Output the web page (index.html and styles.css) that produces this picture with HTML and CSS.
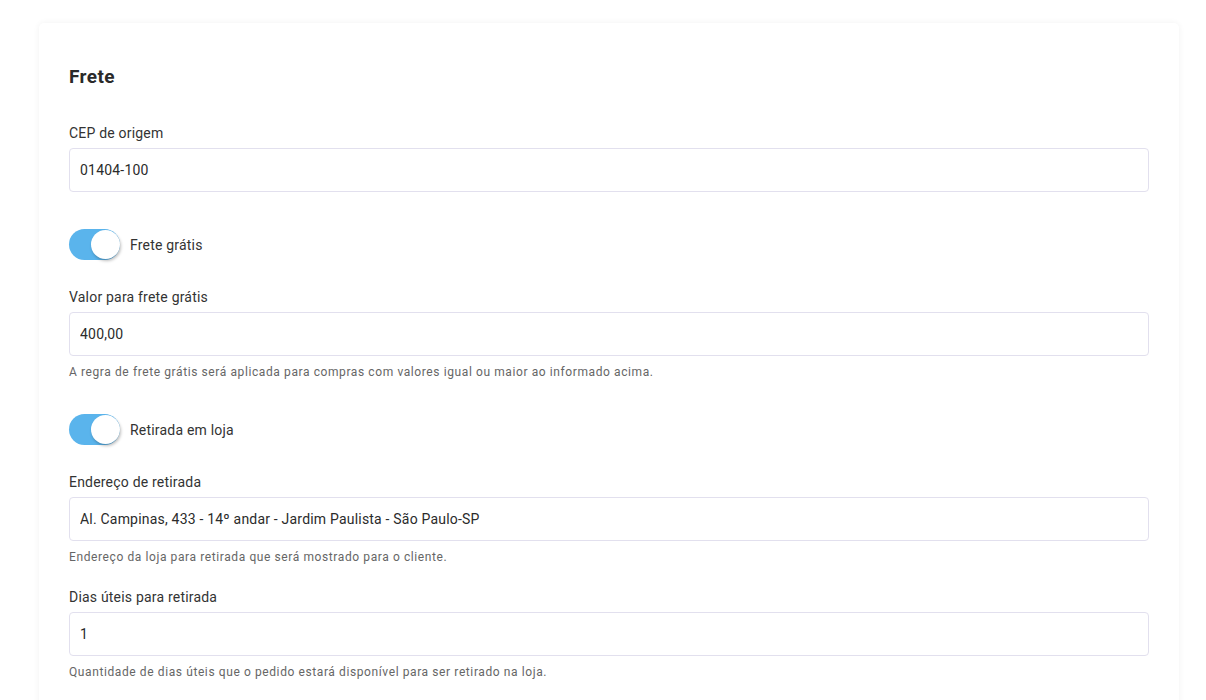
FILE: index.html
```html
<!DOCTYPE html>
<html lang="pt-BR">

<head>
    <meta charset="UTF-8">
    <title>Frete</title>
    <link rel="stylesheet" href="styles.css">
</head>

<body>
    <div class="page">
        <div class="card">
            <h2 class="card-title">Frete</h2>

            <div class="field field-spaced">
                <label class="field-label" for="cep">CEP de origem</label>
                <input class="field-input" id="cep" type="text" value="01404-100">
            </div>

            <div class="switch-row">
                <label class="switch">
                    <input type="checkbox" checked>
                    <span class="slider"></span>
                </label>
                <span class="switch-label">Frete grátis</span>
            </div>

            <div class="field">
                <label class="field-label" for="valor">Valor para frete grátis</label>
                <input class="field-input" id="valor" type="text" value="400,00">
                <small class="field-help">A regra de frete grátis será aplicada para compras com valores igual ou maior ao informado acima.</small>
            </div>

            <div class="switch-row">
                <label class="switch">
                    <input type="checkbox" checked>
                    <span class="slider"></span>
                </label>
                <span class="switch-label">Retirada em loja</span>
            </div>

            <div class="field">
                <label class="field-label" for="endereco">Endereço de retirada</label>
                <input class="field-input" id="endereco" type="text" value="Al. Campinas, 433 - 14º andar - Jardim Paulista - São Paulo-SP">
                <small class="field-help">Endereço da loja para retirada que será mostrado para o cliente.</small>
            </div>

            <div class="field">
                <label class="field-label" for="dias">Dias úteis para retirada</label>
                <input class="field-input" id="dias" type="text" value="1">
                <small class="field-help">Quantidade de dias úteis que o pedido estará disponível para ser retirado na loja.</small>
            </div>
        </div>
    </div>
</body>

</html>
```

FILE: styles.css
```css
* {
    box-sizing: border-box;
    margin: 0;
    padding: 0;
}

body {
    font-family: 'Roboto', 'Liberation Sans', sans-serif;
    color: #2b2b2b;
    background: #fff;
    letter-spacing: 0.2px;
}

.page {
    padding: 23px 27px 0 39px;
}

/* Card */
.card {
    background: #fff;
    border-radius: 5px;
    padding: 42px 30px 30px;
    box-shadow: 0 0 6px rgba(0, 0, 0, 0.06);
}

.card-title {
    font-size: 19px;
    font-weight: 700;
    line-height: 24px;
    letter-spacing: 0.4px;
    color: #2a2a2a;
    margin-bottom: 34px;
}

/* Fields */
.field {
    margin-bottom: 22px;
}

.field-spaced {
    margin-bottom: 25px;
}

.field-label {
    display: block;
    font-size: 14px;
    line-height: 20px;
    color: #333;
    margin-bottom: 5px;
}

.field-input {
    display: block;
    width: 100%;
    height: 44px;
    padding: 0 10px;
    font-family: inherit;
    font-size: 14px;
    letter-spacing: 0.2px;
    color: #2b2b2b;
    background: #fff;
    border: 1px solid #e2e0ee;
    border-radius: 4px;
    outline: none;
}

.field-help {
    display: block;
    margin-top: 8px;
    font-size: 12px;
    line-height: 16px;
    letter-spacing: 0.6px;
    color: #666;
}

/* Switch */
.switch-row {
    display: flex;
    align-items: center;
    gap: 10px;
    padding: 12px 0 13px;
    margin-bottom: 14px;
}

.switch {
    position: relative;
    display: inline-block;
    width: 51px;
    height: 31px;
}

.switch input {
    display: none;
}

.slider {
    position: absolute;
    inset: 0;
    background: #ccc;
    border-radius: 16px;
    cursor: pointer;
}

.slider::before {
    content: "";
    position: absolute;
    top: 1px;
    left: 1px;
    width: 29px;
    height: 29px;
    border-radius: 50%;
    background: #fff;
    box-shadow: 1px 2px 3px rgba(0, 0, 0, 0.25);
    transition: transform 0.2s;
}

.switch input:checked + .slider {
    background: #5ab4ec;
}

.switch input:checked + .slider::before {
    transform: translateX(21px);
}

.switch-label {
    font-size: 14px;
    color: #333;
}
```
